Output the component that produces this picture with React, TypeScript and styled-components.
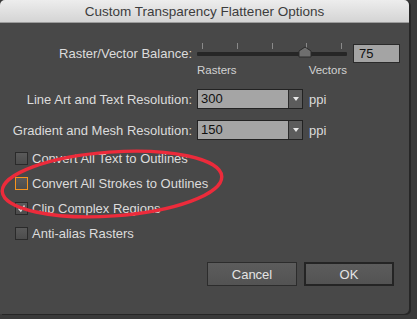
import styled, { createGlobalStyle } from "styled-components";

const GlobalStyle = createGlobalStyle`
  html, body {
    margin: 0;
    padding: 0;
    background: #3a3a3a;
  }
`;

const Screen = styled.div`
  width: 417px;
  height: 319px;
  overflow: hidden;
  background: #3a3a3a;
  font-family: "Liberation Sans", Arial, sans-serif;
  position: relative;
`;

const Window = styled.div`
  width: 409px;
  height: 314px;
  border-radius: 5px 5px 5px 0;
  background: #484848;
  box-shadow: 2px 1px 0 #262626;
  display: flex;
  flex-direction: column;
  overflow: hidden;
`;

const TitleBar = styled.div`
  height: 22px;
  flex: none;
  background: linear-gradient(#ededed, #d4d4d4);
  border-bottom: 1px solid #9c9c9c;
  display: flex;
  align-items: center;
  justify-content: center;
  color: #3c3c3c;
  font-size: 13.5px;
`;

const Body = styled.div`
  flex: 1;
  display: flex;
  flex-direction: column;
  padding: 20px 15px 0 0;
  color: #dcdcdc;
  font-size: 13px;
`;

const FieldRow = styled.div<{ $top?: number }>`
  display: grid;
  grid-template-columns: 192px auto auto;
  justify-content: start;
  column-gap: 5px;
  align-items: center;
  margin-top: ${({ $top }) => $top ?? 0}px;
`;

const Label = styled.div<{ $top?: boolean }>`
  text-align: right;
  white-space: nowrap;
  align-self: ${({ $top }) => ($top ? "start" : "center")};
  margin-top: ${({ $top }) => ($top ? "3px" : "0")};
`;

const SliderBlock = styled.div`
  width: 150px;
  display: flex;
  flex-direction: column;
`;

const Ticks = styled.div`
  display: flex;
  justify-content: space-between;
  padding: 0 5px;
  height: 6px;
`;

const Tick = styled.span`
  width: 1px;
  height: 6px;
  background: #8a8a8a;
`;

const Track = styled.div`
  position: relative;
  margin-top: 3px;
  height: 4px;
  background: #262626;
  border-radius: 1px;
`;

const Thumb = styled.svg`
  position: absolute;
  top: -6px;
  width: 14px;
  height: 12px;
`;

const ScaleLabels = styled.div`
  display: flex;
  justify-content: space-between;
  margin-top: 8px;
  font-size: 11.5px;
  color: #d2d2d2;
`;

const NumberBox = styled.div`
  width: 40px;
  height: 17px;
  margin-left: 1px;
  align-self: start;
  margin-top: 1px;
  background: #a4a4a4;
  border: 1px solid #2a2a2a;
  color: #111;
  font-size: 13px;
  line-height: 17px;
  padding-left: 5px;
  box-sizing: content-box;
`;

const Select = styled.div`
  width: 104px;
  height: 18px;
  display: flex;
  border: 1px solid #222;
`;

const SelectValue = styled.div`
  flex: 1;
  background: #a5a5a5;
  color: #111;
  font-size: 13px;
  line-height: 18px;
  padding-left: 3px;
`;

const SelectArrow = styled.div`
  width: 13px;
  background: #5c5c5c;
  border-left: 1px solid #2a2a2a;
  display: flex;
  align-items: center;
  justify-content: center;
  &::after {
    content: "";
    border-left: 3px solid transparent;
    border-right: 3px solid transparent;
    border-top: 4px solid #e8e8e8;
  }
`;

const Unit = styled.span`
  margin-left: 1px;
`;

const Checks = styled.div`
  display: flex;
  flex-direction: column;
  gap: 12px;
  margin-top: 12px;
  padding-left: 15px;
`;

const CheckRow = styled.div`
  display: flex;
  align-items: center;
  gap: 4px;
  height: 13px;
  white-space: nowrap;
`;

const Box = styled.span`
  width: 11px;
  height: 11px;
  flex: none;
  border: 1px solid #2a2a2a;
  background: linear-gradient(#5a5a5a, #4c4c4c);
  display: flex;
  align-items: center;
  justify-content: center;
`;

const FocusBox = styled(Box)`
  border-color: #f7941d;
`;

const Buttons = styled.div`
  display: flex;
  justify-content: flex-end;
  gap: 7px;
  margin-top: 22px;
`;

const Button = styled.button<{ $primary?: boolean }>`
  width: 90px;
  height: 24px;
  box-sizing: border-box;
  background: linear-gradient(#5c5c5c, #535353);
  border: ${({ $primary }) => ($primary ? "2px solid #242424" : "1px solid #2c2c2c")};
  color: #e4e4e4;
  font-family: "Liberation Sans", Arial, sans-serif;
  font-size: 13px;
  padding: 0;
`;

const Annotation = styled.svg`
  position: absolute;
  left: 0;
  top: 148px;
  width: 230px;
  height: 74px;
  pointer-events: none;
`;

const ticks = [0, 1, 2, 3, 4];
const options = [
  { label: "Convert All Text to Outlines", checked: false, focus: false },
  { label: "Convert All Strokes to Outlines", checked: false, focus: true },
  { label: "Clip Complex Regions", checked: true, focus: false },
  { label: "Anti-alias Rasters", checked: false, focus: false },
];

const Check = () => (
  <svg width="9" height="9" viewBox="0 0 9 9">
    <path d="M1.5 4.5 L3.8 7 L7.5 1.5" fill="none" stroke="#d8d8d8" strokeWidth="1.4" />
  </svg>
);

export default function App() {
  return (
    <Screen>
      <GlobalStyle />
      <Window>
        <TitleBar>Custom Transparency Flattener Options</TitleBar>
        <Body>
          <FieldRow>
            <Label $top>Raster/Vector Balance:</Label>
            <SliderBlock>
              <Ticks>
                {ticks.map((t) => (
                  <Tick key={t} />
                ))}
              </Ticks>
              <Track>
                <Thumb viewBox="0 0 14 12" style={{ left: 101 }}>
                  <path d="M1 11 V5 L7 1 L13 5 V11 Z" fill="#6e6e6e" stroke="#2a2a2a" />
                </Thumb>
              </Track>
              <ScaleLabels>
                <span>Rasters</span>
                <span>Vectors</span>
              </ScaleLabels>
            </SliderBlock>
            <NumberBox>75</NumberBox>
          </FieldRow>
          <FieldRow $top={13}>
            <Label>Line Art and Text Resolution:</Label>
            <Select>
              <SelectValue>300</SelectValue>
              <SelectArrow />
            </Select>
            <Unit>ppi</Unit>
          </FieldRow>
          <FieldRow $top={11}>
            <Label>Gradient and Mesh Resolution:</Label>
            <Select>
              <SelectValue>150</SelectValue>
              <SelectArrow />
            </Select>
            <Unit>ppi</Unit>
          </FieldRow>
          <Checks>
            {options.map((o) => (
              <CheckRow key={o.label}>
                {o.focus ? (
                  <FocusBox>{o.checked && <Check />}</FocusBox>
                ) : (
                  <Box>{o.checked && <Check />}</Box>
                )}
                <span>{o.label}</span>
              </CheckRow>
            ))}
          </Checks>
          <Buttons>
            <Button>Cancel</Button>
            <Button $primary>OK</Button>
          </Buttons>
        </Body>
      </Window>
      <Annotation viewBox="0 0 230 74">
        <ellipse
          cx="112"
          cy="36"
          rx="110"
          ry="32"
          fill="none"
          stroke="#ec2b3b"
          strokeWidth="3.4"
          transform="rotate(-4 112 36)"
        />
      </Annotation>
    </Screen>
  );
}
